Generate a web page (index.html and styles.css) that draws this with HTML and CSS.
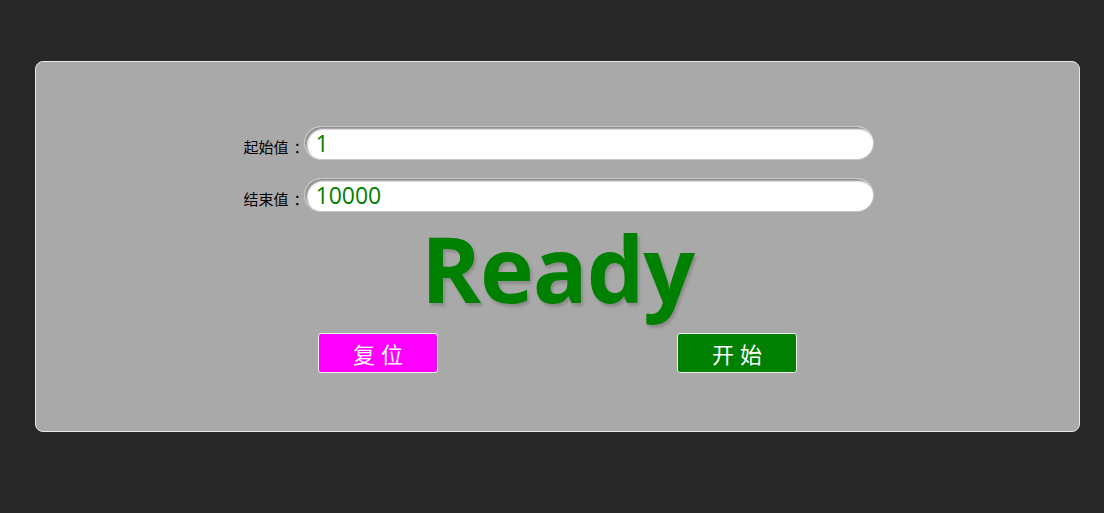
FILE: index.html
```html
<!DOCTYPE html>
<html lang="zh">
<head>
<meta charset="utf-8">
<link rel="stylesheet" href="styles.css">
</head>
<body>
<div class="panel">
  <div class="row">
    <label class="label">起始值<span class="colon">：</span></label>
    <input class="field" type="text" value="1">
  </div>
  <div class="row">
    <label class="label">结束值<span class="colon">：</span></label>
    <input class="field" type="text" value="10000">
  </div>
  <div class="status">Ready</div>
  <div class="buttons">
    <button class="btn reset">复位</button>
    <button class="btn start">开始</button>
  </div>
</div>
</body>
</html>
```
FILE: styles.css
```css
html, body {
  margin: 0;
  padding: 0;
  background: #282828;
}
body {
  padding: 61px 24px 0 35px;
  font-family: "Noto Sans CJK SC", sans-serif;
  overflow: hidden;
  height: 513px;
  box-sizing: border-box;
}
.panel {
  width: 1043px;
  height: 369px;
  background: #a9a9a9;
  border: 1px solid #e8e8e8;
  border-radius: 8px;
  display: flex;
  flex-direction: column;
  align-items: center;
}
.row {
  display: flex;
  align-items: center;
  height: 34px;
  margin-top: 18px;
  transform: translateX(-4px);
}
.row:first-child {
  margin-top: 64px;
}
.label {
  font-size: 15px;
  color: #000;
  width: 70px;
  text-align: right;
  padding-top: 6px;
  white-space: nowrap;
  font-family: "Noto Sans CJK SC", sans-serif;
}
.colon {
  display: inline-block;
  width: 15px;
  padding-left: 5px;
  box-sizing: border-box;
  text-align: left;
}
.field {
  width: 570px;
  height: 34px;
  box-sizing: border-box;
  border: 1px solid #c8c8c8;
  border-radius: 17px;
  background: #fff;
  box-shadow: inset 2px 2px 2px #8a8a8a;
  color: #008000;
  font-family: "Open Sans", "Noto Sans", sans-serif;
  font-size: 23px;
  padding: 0 11px;
  outline: none;
}
.status {
  font-family: "Open Sans", sans-serif;
  font-weight: 700;
  font-size: 91px;
  line-height: 100px;
  color: #008000;
  text-shadow: 2px 3px 3px #8c8c8c;
  margin-top: 6px;
  letter-spacing: -1px;
}
.buttons {
  display: flex;
  gap: 239px;
  margin-top: 15px;
}
.btn {
  width: 120px;
  height: 40px;
  border: 1px solid #f0f0f0;
  border-radius: 3px;
  color: #fff;
  font-family: "Noto Sans CJK SC", sans-serif;
  font-size: 22px;
  letter-spacing: 6px;
  padding: 0 0 0 6px;
  line-height: 38px;
}
.reset { background: #ff00ff; }
.start { background: #008000; }
```
